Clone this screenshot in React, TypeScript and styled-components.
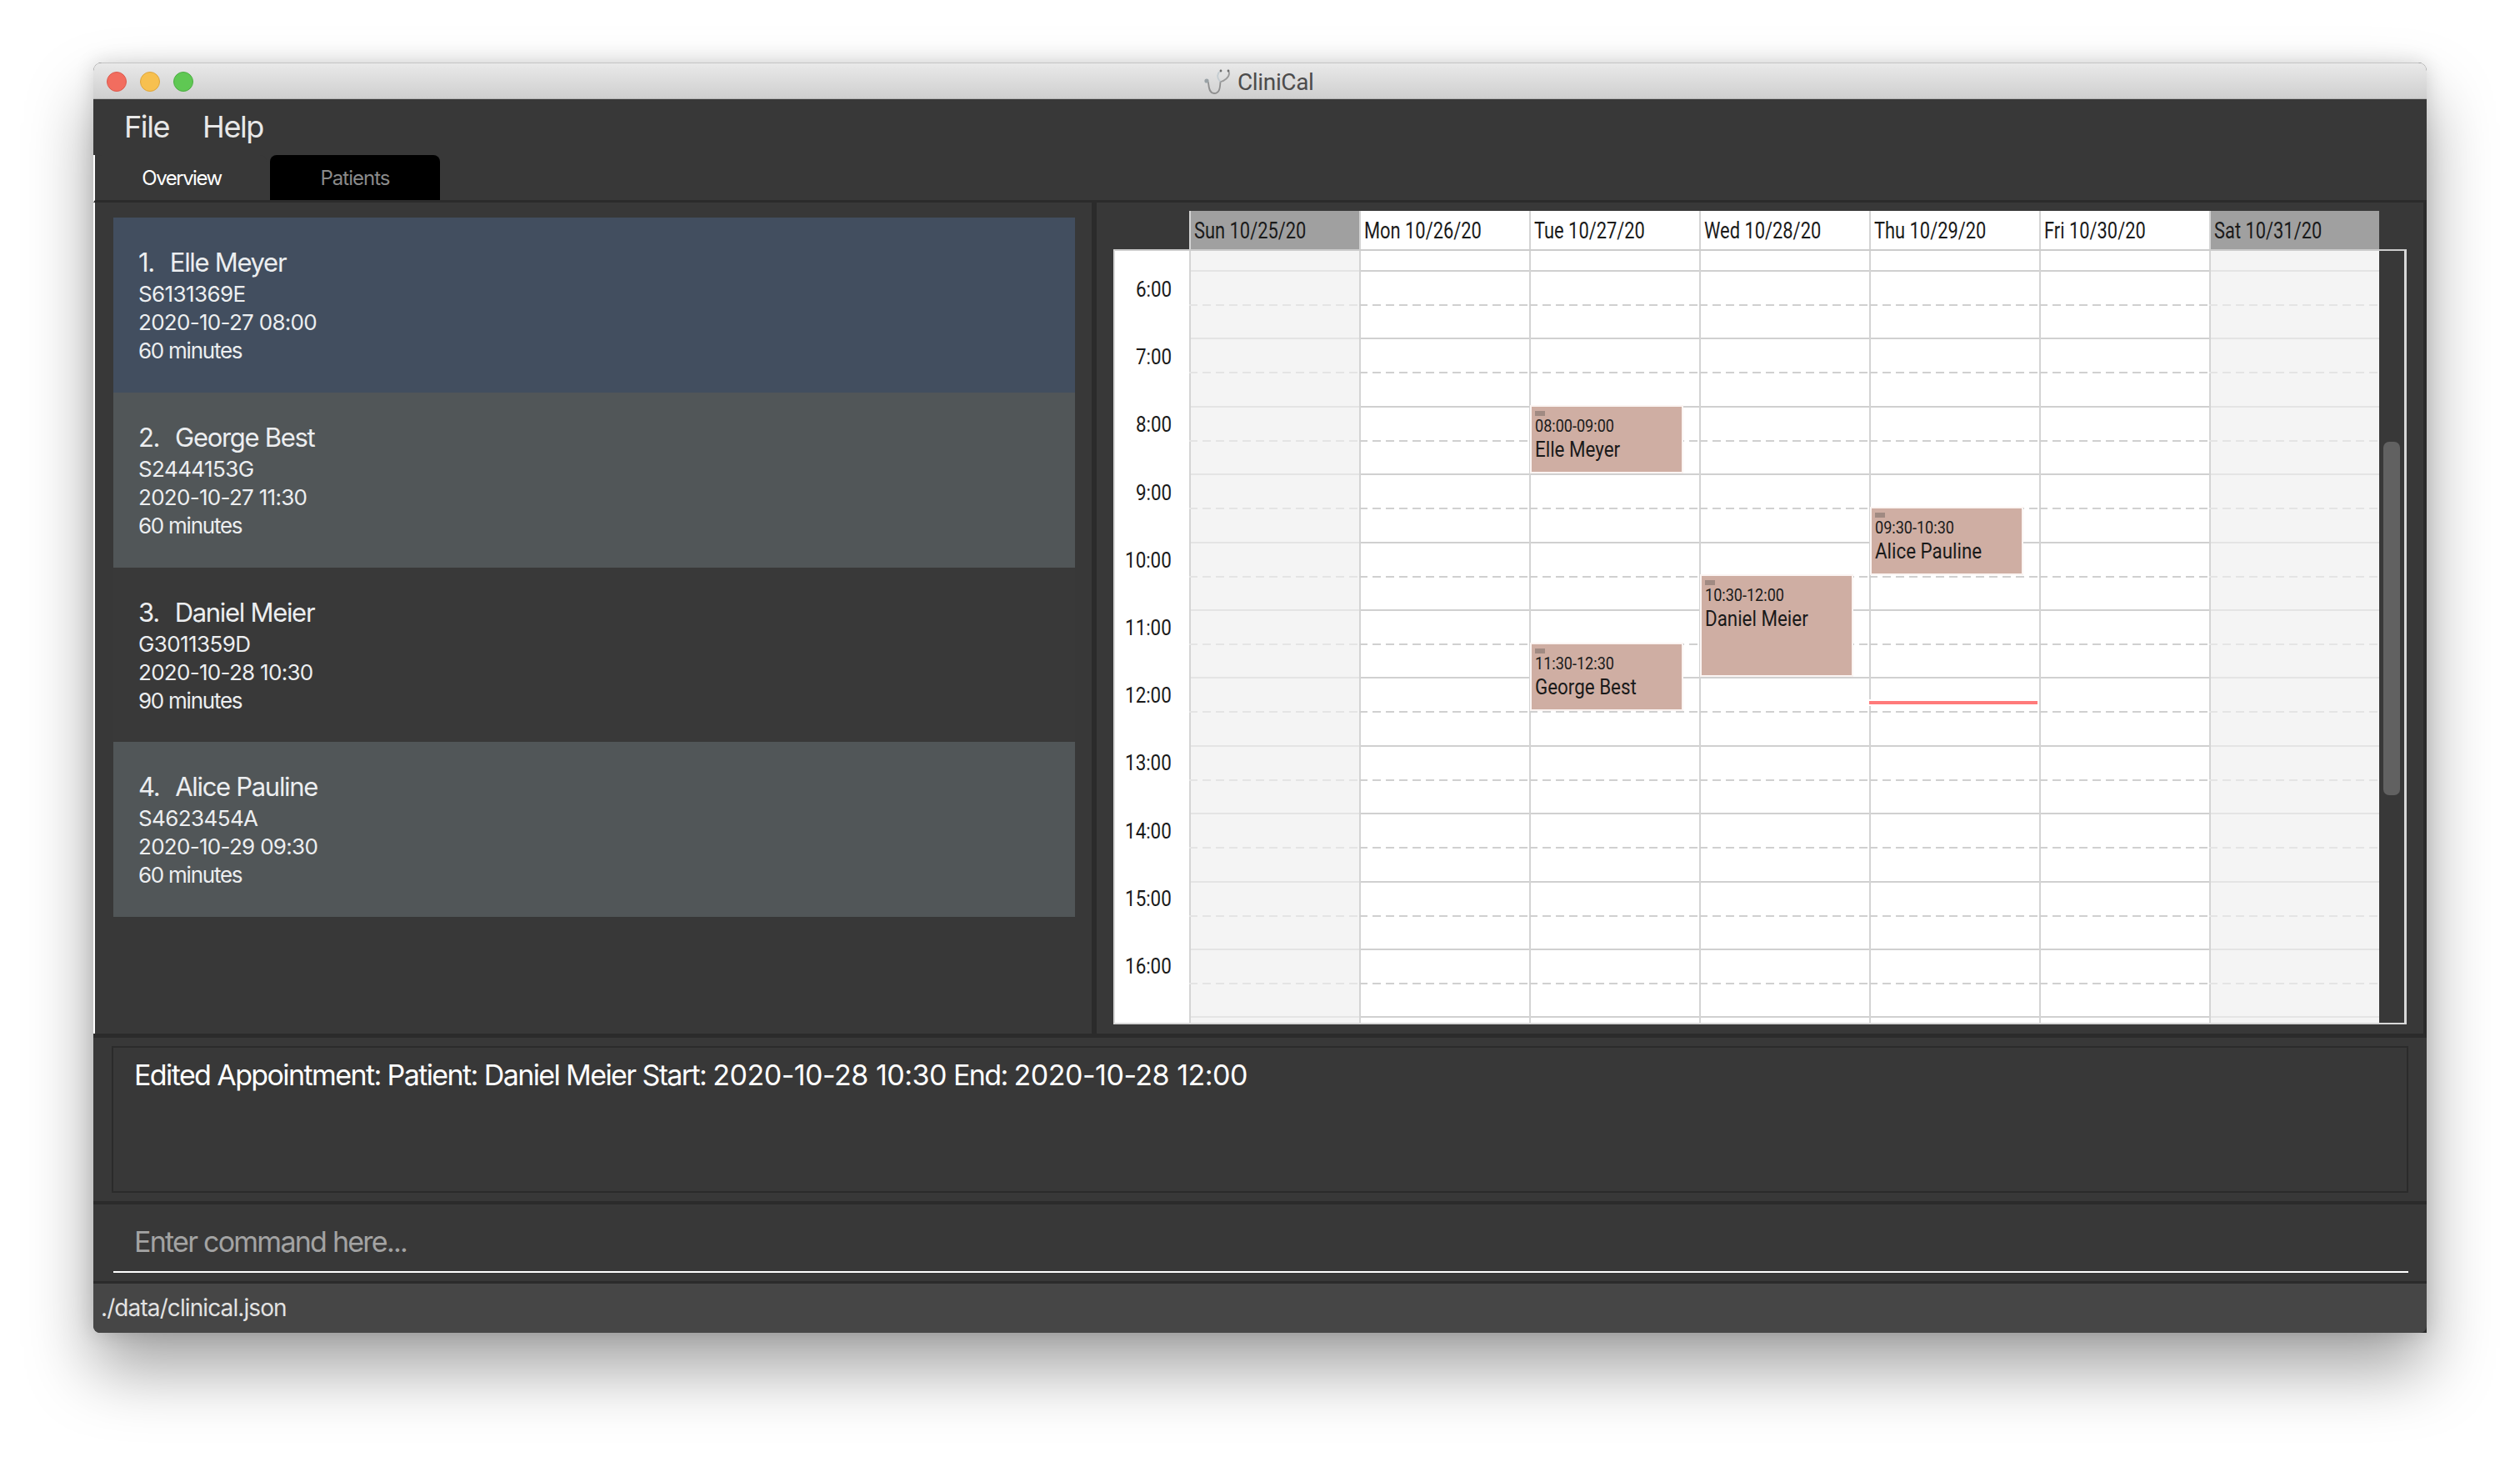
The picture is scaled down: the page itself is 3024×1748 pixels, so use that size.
import { FC } from "react";
import styled, { createGlobalStyle } from "styled-components";

const GlobalStyle = createGlobalStyle`
  html, body {
    margin: 0;
    padding: 0;
    background: #ffffff;
  }
  * {
    box-sizing: border-box;
  }
`;

const HOUR_HEIGHT = 81.4;
const FIRST_HOUR = 6;

const Page = styled.div`
  width: 3024px;
  height: 1748px;
  padding: 75px 112px 0;
  overflow: hidden;
  font-family: Inter, "Noto Sans", sans-serif;
`;

const Window = styled.div`
  width: 2800px;
  height: 1524px;
  display: flex;
  flex-direction: column;
  background: #2b2b2b;
  border-radius: 10px 10px 0 8px;
  box-shadow: 0 44px 80px rgba(0, 0, 0, 0.36), 0 0 24px rgba(0, 0, 0, 0.14);
  overflow: hidden;
`;

const TitleBar = styled.div`
  height: 44px;
  flex: none;
  display: flex;
  align-items: center;
  position: relative;
  padding-left: 16px;
  gap: 16px;
  background: linear-gradient(#e9e9e9, #cfcfcf);
  border-top: 1px solid #c4c4c4;
  border-bottom: 1px solid #b4b4b4;
`;

const Light = styled.span<{ $color: string; $edge: string }>`
  width: 24px;
  height: 24px;
  margin-top: 1px;
  border-radius: 50%;
  background: ${({ $color }) => $color};
  border: 1px solid ${({ $edge }) => $edge};
`;

const Title = styled.div`
  position: absolute;
  left: 1332px;
  top: 1px;
  height: 42px;
  display: flex;
  align-items: center;
  gap: 7px;
  color: #4c4c4c;
  font-family: Roboto, sans-serif;
  font-size: 28px;
  letter-spacing: -0.35px;
`;

const MenuBar = styled.div`
  height: 67px;
  flex: none;
  display: flex;
  align-items: center;
  gap: 40px;
  padding: 0 0 1px 37px;
  background: #383838;
  color: #e8e8e8;
  font-size: 36px;
  letter-spacing: -1.4px;
`;

const TabBar = styled.div`
  height: 57px;
  flex: none;
  display: flex;
  gap: 4px;
  background: #383838;
  border-left: 2px solid #ffffff;
  border-bottom: 3px solid #2b2b2b;
`;

const Tab = styled.div<{ $active?: boolean }>`
  width: ${({ $active }) => ($active ? "206px" : "204px")};
  height: 54px;
  display: flex;
  align-items: center;
  justify-content: center;
  padding-left: ${({ $active }) => ($active ? "2px" : "0")};
  border-radius: 8px 8px 0 0;
  background: ${({ $active }) => ($active ? "#383838" : "#000000")};
  color: ${({ $active }) => ($active ? "#ffffff" : "#8a8a8a")};
  font-size: 24px;
  letter-spacing: ${({ $active }) => ($active ? "-1.5px" : "-1px")};
`;

const Main = styled.div`
  height: 997px;
  flex: none;
  display: flex;
  background: #383838;
  border-left: 2px solid #ffffff;
  border-right: 4px solid #2b2b2b;
`;

const ListPane = styled.div`
  width: 1196px;
  flex: none;
  padding: 18px 20px 0 22px;
`;

const Card = styled.div<{ $tone: "selected" | "even" | "odd" }>`
  height: 209.75px;
  padding: 33px 30px 0;
  color: #eceef0;
  background: ${({ $tone }) =>
    $tone === "selected" ? "#424e5f" : $tone === "even" ? "#515658" : "#393939"};
`;

const CardTitle = styled.div`
  font-size: 31px;
  line-height: 42px;
  letter-spacing: -1.3px;
  white-space: pre;
`;

const CardIndex = styled.span`
  margin-right: 4px;
`;

const CardLine = styled.div<{ $spacing: number }>`
  font-size: 26px;
  line-height: 34px;
  letter-spacing: ${({ $spacing }) => $spacing}px;
`;

const PaneDivider = styled.div`
  width: 6px;
  flex: none;
  background: #2b2b2b;
`;

const CalendarPane = styled.div`
  flex: 1;
  min-width: 0;
  padding: 10px 20px 0;
`;

const CalendarHead = styled.div`
  display: flex;
  height: 46px;
  margin-left: 91px;
`;

const HeadCell = styled.div<{ $weekend?: boolean }>`
  width: 204px;
  flex: none;
  padding: 0 0 0 4px;
  display: flex;
  align-items: center;
  border-left: 2px solid #d4d4d4;
  background: ${({ $weekend }) => ($weekend ? "#a0a0a0" : "#ffffff")};
  color: #1a1a1a;
`;

const Narrow = styled.span`
  display: inline-block;
  font-family: Roboto, sans-serif;
  white-space: nowrap;
  transform: scaleX(0.86);
  transform-origin: left center;
`;

const HeadText = styled(Narrow)`
  font-size: 27px;
  margin-top: 2px;
  transform: scaleX(0.81);
`;

const CalendarBody = styled.div`
  height: 930px;
  display: flex;
  position: relative;
  overflow: hidden;
  background: #383838;
  border: 2px solid #d8d8d8;
  border-right-width: 3px;
  border-top-color: #cccccc;
`;

const Gutter = styled.div`
  width: 89px;
  flex: none;
  padding-top: 23px;
  background: #ffffff;
`;

const GutterHour = styled.div`
  height: 81.2px;
  padding: 8px 21px 0 0;
  display: flex;
  justify-content: flex-end;
  color: #1a1a1a;
`;

const HourText = styled(Narrow)`
  font-size: 26px;
  transform-origin: right center;
`;

const Day = styled.div<{ $weekend?: boolean }>`
  width: 204px;
  flex: none;
  padding-top: 23px;
  position: relative;
  border-left: 2px solid #d4d4d4;
  background: ${({ $weekend }) => ($weekend ? "#f4f4f4" : "#ffffff")};
`;

const Hour = styled.div<{ $weekend?: boolean }>`
  height: ${HOUR_HEIGHT}px;
  position: relative;
  border-top: 2px solid ${({ $weekend }) => ($weekend ? "#e4e4e4" : "#d0d0d0")};

  &::after {
    content: "";
    position: absolute;
    left: -2px;
    right: 0;
    top: 39px;
    height: 2px;
    background: repeating-linear-gradient(
      90deg,
      ${({ $weekend }) => ($weekend ? "#e4e4e4" : "#d0d0d0")} 0 10px,
      transparent 10px 16px
    );
  }
`;

const Event = styled.div`
  position: absolute;
  left: -1px;
  width: 184px;
  padding: 5px 0 0 4px;
  overflow: hidden;
  background: #cfaea3;
  border: 2px solid #fbf5f3;
  color: #1a1a1a;
  z-index: 1;
`;

const EventHandle = styled.div`
  width: 12px;
  height: 6px;
  background: #a08a82;
`;

const EventTime = styled(Narrow)`
  display: block;
  font-size: 21px;
  line-height: 25px;
`;

const EventName = styled(Narrow)`
  display: block;
  font-size: 26px;
  line-height: 31px;
`;

const NowLine = styled.div`
  position: absolute;
  left: -2px;
  width: 202px;
  height: 8px;
  background: #ff7a7a;
  border-top: 2px solid #ffffff;
  border-bottom: 2px solid #ffffff;
  z-index: 1;
`;

const ScrollTrack = styled.div`
  flex: 1;
  background: #383838;
`;

const ScrollThumb = styled.div`
  position: absolute;
  left: 1522px;
  top: 229px;
  width: 20px;
  height: 424px;
  border-radius: 7px;
  background: #616161;
`;

const ResultArea = styled.div`
  height: 200px;
  flex: none;
  margin-top: 5px;
  padding: 10px 22px;
  background: #383838;
  border-bottom: 4px solid #2b2b2b;
`;

const ResultBox = styled.div`
  height: 176px;
  padding: 10px 0 0 25px;
  border: 2px solid #2b2b2b;
  color: #ffffff;
  font-size: 34px;
  line-height: 46px;
  letter-spacing: -1.6px;
`;

const ResultDate = styled.span`
  letter-spacing: -0.5px;
`;

const CommandArea = styled.div`
  height: 92px;
  flex: none;
  padding: 0 22px 10px 24px;
  background: #383838;
`;

const CommandBox = styled.div`
  height: 82px;
  padding: 22px 0 0 25px;
  border-bottom: 2px solid #ffffff;
  color: #a3a3a3;
  font-size: 34px;
  line-height: 46px;
  letter-spacing: -1.75px;
`;

const StatusBar = styled.div`
  flex: 1;
  margin-top: 3px;
  padding: 0 0 2px 9px;
  display: flex;
  align-items: center;
  background: #464646;
  color: #e2e2e2;
  font-size: 28px;
  letter-spacing: -0.9px;
  border-radius: 0 0 8px 8px;
`;

const StethoscopeIcon: FC = () => (
  <svg width="34" height="32" viewBox="0 0 34 32" fill="none" strokeWidth="1.8" strokeLinecap="round">
    <path d="M6 17c.5 4 .5 13 7 13 6 0 7-5 7.500-14" stroke="#8f8f8f" />
    <path d="M21 16c-3-2-5-6-3-10 .6-1.200 1.600-2 3-2.500" stroke="#c3ccd1" />
    <path d="M21 16c4-1 10-5 10-10 0-1-.4-2-1-2.500" stroke="#9a9a9a" />
    <circle cx="4" cy="15" r="2.600" fill="#9aa2a6" />
    <circle cx="21" cy="3" r="1.400" fill="#6e6e6e" />
    <circle cx="30" cy="3" r="1.400" fill="#6e6e6e" />
  </svg>
);

const patients = [
  { index: "1.", name: " Elle Meyer", id: "S6131369E", start: "2020-10-27 08:00", length: "60 minutes", tone: "selected" },
  { index: "2.", name: " George Best", id: "S2444153G", start: "2020-10-27 11:30", length: "60 minutes", tone: "even" },
  { index: "3.", name: " Daniel Meier", id: "G3011359D", start: "2020-10-28 10:30", length: "90 minutes", tone: "odd" },
  { index: "4.", name: " Alice Pauline", id: "S4623454A", start: "2020-10-29 09:30", length: "60 minutes", tone: "even" },
] as const;

const days = [
  { label: "Sun 10/25/20", weekend: true },
  { label: "Mon 10/26/20", weekend: false },
  { label: "Tue 10/27/20", weekend: false },
  { label: "Wed 10/28/20", weekend: false },
  { label: "Thu 10/29/20", weekend: false },
  { label: "Fri 10/30/20", weekend: false },
  { label: "Sat 10/31/20", weekend: true },
];

const labelledHours = [6, 7, 8, 9, 10, 11, 12, 13, 14, 15, 16];
const hours = [...labelledHours, 17];

const events = [
  { day: 2, from: 8, to: 9, time: "08:00-09:00", name: "Elle Meyer" },
  { day: 2, from: 11.5, to: 12.5, time: "11:30-12:30", name: "George Best" },
  { day: 3, from: 10.5, to: 12, time: "10:30-12:00", name: "Daniel Meier" },
  { day: 4, from: 9.5, to: 10.5, time: "09:30-10:30", name: "Alice Pauline" },
];

// the grid starts 23px under the header, and the first hour is 6:00
const hourTop = (hour: number) => 23 + (hour - FIRST_HOUR) * HOUR_HEIGHT;

const App: FC = () => (
  <>
    <GlobalStyle />
    <Page>
      <Window>
        <TitleBar>
          <Light $color="#f26d5f" $edge="#dc5a4e" />
          <Light $color="#f7c04f" $edge="#dea63c" />
          <Light $color="#5fc853" $edge="#4cae42" />
          <Title>
            <StethoscopeIcon />
            CliniCal
          </Title>
        </TitleBar>
        <MenuBar>
          <span>File</span>
          <span>Help</span>
        </MenuBar>
        <TabBar>
          <Tab $active>Overview</Tab>
          <Tab>Patients</Tab>
        </TabBar>
        <Main>
          <ListPane>
            {patients.map((patient) => (
              <Card key={patient.id} $tone={patient.tone}>
                <CardTitle>
                  <CardIndex>{patient.index}</CardIndex> {patient.name}
                </CardTitle>
                <CardLine $spacing={-0.6}>{patient.id}</CardLine>
                <CardLine $spacing={-0.7}>{patient.start}</CardLine>
                <CardLine $spacing={-1.25}>{patient.length}</CardLine>
              </Card>
            ))}
          </ListPane>
          <PaneDivider />
          <CalendarPane>
            <CalendarHead>
              {days.map((day) => (
                <HeadCell key={day.label} $weekend={day.weekend}>
                  <HeadText>{day.label}</HeadText>
                </HeadCell>
              ))}
            </CalendarHead>
            <CalendarBody>
              <Gutter>
                {labelledHours.map((hour) => (
                  <GutterHour key={hour}>
                    <HourText>{hour}:00</HourText>
                  </GutterHour>
                ))}
              </Gutter>
              {days.map((day, index) => (
                <Day key={day.label} $weekend={day.weekend}>
                  {hours.map((hour) => (
                    <Hour key={hour} $weekend={day.weekend} />
                  ))}
                  {events
                    .filter((event) => event.day === index)
                    .map((event) => (
                      <Event
                        key={event.name}
                        style={{
                          top: hourTop(event.from) - 1,
                          height: (event.to - event.from) * HOUR_HEIGHT + 1,
                        }}
                      >
                        <EventHandle />
                        <EventTime>{event.time}</EventTime>
                        <EventName>{event.name}</EventName>
                      </Event>
                    ))}
                  {index === 4 && <NowLine style={{ top: hourTop(12.33) }} />}
                </Day>
              ))}
              <ScrollTrack />
              <ScrollThumb />
            </CalendarBody>
          </CalendarPane>
        </Main>
        <ResultArea>
          <ResultBox>
            Edited Appointment: Patient: Daniel Meier Start: <ResultDate>2020-10-28 10:30</ResultDate> End:{" "}
            <ResultDate>2020-10-28 12:00</ResultDate>
          </ResultBox>
        </ResultArea>
        <CommandArea>
          <CommandBox>Enter command here...</CommandBox>
        </CommandArea>
        <StatusBar>./data/clinical.json</StatusBar>
      </Window>
    </Page>
  </>
);

export default App;
